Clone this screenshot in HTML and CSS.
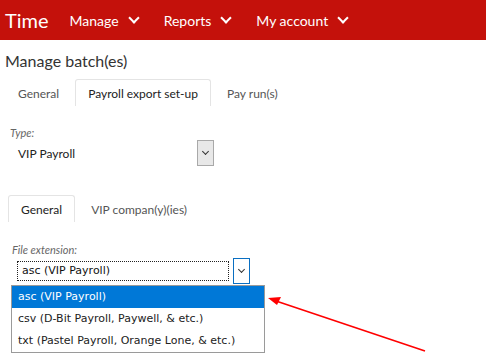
FILE: index.html
```html
<!DOCTYPE html>
<html lang="en">
<head>
    <meta charset="UTF-8">
    <title>Time - Manage batch(es)</title>
    <link rel="stylesheet" href="styles.css">
</head>
<body>
    <div class="topbar">
        <div class="brand">Time</div>
        <div class="nav-item">Manage <span class="chev"></span></div>
        <div class="nav-item">Reports <span class="chev"></span></div>
        <div class="nav-item">My account <span class="chev"></span></div>
    </div>
    <div class="page">
        <div class="title">Manage batch(es)</div>
        <div class="tabs">
            <div class="tab">General</div>
            <div class="tab active">Payroll export set-up</div>
            <div class="tab">Pay run(s)</div>
        </div>
        <div class="panel">
            <div class="field-label">Type:</div>
            <div class="plain-select">
                <span class="plain-value">VIP Payroll</span>
                <span class="drop-btn"><span class="small-chev"></span></span>
            </div>
            <div class="tabs sub-tabs">
                <div class="tab active">General</div>
                <div class="tab">VIP compan(y)(ies)</div>
            </div>
            <div class="sub-panel">
                <div class="field-label">File extension:</div>
                <div class="open-select">
                    <span class="focus-value">asc (VIP Payroll)</span>
                    <span class="drop-btn focused"><span class="small-chev"></span></span>
                    <!-- opened list of the select -->
                    <div class="option-list">
                        <div class="option selected">asc (VIP Payroll)</div>
                        <div class="option">csv (D-Bit Payroll, Paywell, &amp; etc.)</div>
                        <div class="option">txt (Pastel Payroll, Orange Lone, &amp; etc.)</div>
                    </div>
                </div>
            </div>
        </div>
    </div>
    <svg class="pointer" width="486" height="354" viewBox="0 0 486 354">
        <line x1="425" y1="351" x2="276" y2="301" stroke="#f00" stroke-width="1.6"/>
        <polygon points="268,298 281,297 277,305" fill="#f00"/>
    </svg>
</body>
</html>
```

FILE: styles.css
```css
body {
    margin: 0;
    padding: 0;
    background: #fff;
    font-family: Lato, "Open Sans", sans-serif;
    color: #333;
    position: relative;
    height: 354px;
    overflow: hidden;
}
.topbar {
    height: 40px;
    background: #c4110b;
    display: flex;
    align-items: center;
    padding-left: 5px;
    color: #fff;
}
.brand {
    font-size: 20px;
    margin-right: 21px;
}
.nav-item {
    font-size: 14px;
    margin-right: 26px;
    display: flex;
    align-items: center;
}
.chev {
    display: inline-block;
    width: 6px;
    height: 6px;
    border-right: 2px solid #fff;
    border-bottom: 2px solid #fff;
    transform: rotate(45deg);
    margin: -4px 0 0 11px;
}
.page {
    padding: 0 5px;
}
.title {
    font-size: 16px;
    line-height: 20px;
    margin-top: 11px;
    color: #333;
}
.tabs {
    display: flex;
    margin-top: 8px;
}
.tab {
    font-size: 12px;
    color: #555;
    padding: 0 12px;
    height: 26px;
    line-height: 28px;
    border: 1px solid transparent;
    border-bottom: none;
    border-radius: 3px 3px 0 0;
    margin-right: 3px;
}
.tab.active {
    border-color: #e4e4e4;
    color: #222;
}
.panel {
    padding: 0 5px;
}
.field-label {
    font-size: 11px;
    font-style: italic;
    color: #666;
}
.panel > .field-label {
    margin-top: 20px;
}
.plain-select {
    display: flex;
    align-items: center;
    width: 204px;
    height: 26px;
    margin-top: 1px;
}
.plain-value {
    flex: 1;
    font-size: 12px;
    color: #222;
    padding-left: 8px;
}
.drop-btn {
    width: 15px;
    height: 24px;
    background: #e8e8e8;
    border: 1px solid #a9a9a9;
    display: flex;
    align-items: center;
    justify-content: center;
}
.drop-btn.focused {
    background: #fff;
    border-color: #0a6fc2;
}
.small-chev {
    width: 4px;
    height: 4px;
    border-right: 1px solid #333;
    border-bottom: 1px solid #333;
    transform: rotate(45deg);
    margin-top: -3px;
}
.sub-tabs {
    margin-top: 29px;
    margin-left: -2px;
}
.sub-panel {
    padding: 0 2px;
}
.sub-panel .field-label {
    margin-top: 21px;
}
.open-select {
    position: relative;
    display: flex;
    align-items: center;
    width: 240px;
    height: 28px;
    margin-top: 1px;
}
.focus-value {
    width: 206px;
    height: 18px;
    margin: 0 4px 0 5px;
    border: 1px dotted #222;
    font-family: "DejaVu Sans", Verdana, sans-serif;
    font-size: 11px;
    line-height: 18px;
    padding-left: 4px;
    color: #111;
}
.option-list {
    position: absolute;
    left: -1px;
    top: 28px;
    width: 252px;
    border: 1px solid #9a9a9a;
    background: #fff;
}
.option {
    height: 22px;
    line-height: 22px;
    padding-left: 6px;
    font-family: "DejaVu Sans", Verdana, sans-serif;
    font-size: 11px;
    color: #222;
}
.option.selected {
    background: #0078d7;
    color: #fff;
}
.pointer {
    position: absolute;
    left: 0;
    top: 0;
    pointer-events: none;
}
```
